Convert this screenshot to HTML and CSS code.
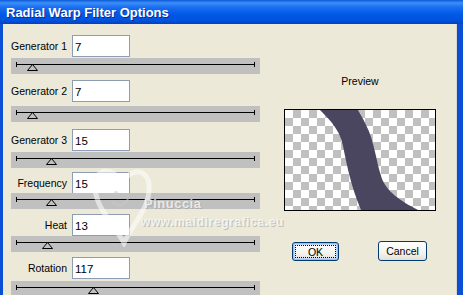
FILE: index.html
```html
<!DOCTYPE html>
<html lang="en">
<head>
  <meta charset="UTF-8" />
  <title>Radial Warp Filter Options</title>
  <link rel="stylesheet" href="styles.css">
</head>
<body>
  <div class="window">
    <div class="titlebar">Radial Warp Filter Options</div>
    <div class="frame">
      <div class="controls">
        <div class="field">
          <div class="row"><label class="label label-first">Generator 1</label><input class="box" type="text" value="7"></div>
          <div class="track"><span class="thumb" style="left: 16px"><svg width="11" height="7"><polygon points="5.5,0.5 10.5,6.5 0.5,6.5" /></svg></span></div>
        </div>
        <div class="field f2">
          <div class="row"><label class="label">Generator 2</label><input class="box" type="text" value="7"></div>
          <div class="track"><span class="thumb" style="left: 16px"><svg width="11" height="7"><polygon points="5.5,0.5 10.5,6.5 0.5,6.5" /></svg></span></div>
        </div>
        <div class="field f3">
          <div class="row"><label class="label">Generator 3</label><input class="box" type="text" value="15"></div>
          <div class="track"><span class="thumb" style="left: 35px"><svg width="11" height="7"><polygon points="5.5,0.5 10.5,6.5 0.5,6.5" /></svg></span></div>
        </div>
        <div class="field f4">
          <div class="row"><label class="label">Frequency</label><input class="box" type="text" value="15"></div>
          <div class="track"><span class="thumb" style="left: 35px"><svg width="11" height="7"><polygon points="5.5,0.5 10.5,6.5 0.5,6.5" /></svg></span></div>
        </div>
        <div class="field f5">
          <div class="row"><label class="label">Heat</label><input class="box" type="text" value="13"></div>
          <div class="track"><span class="thumb" style="left: 31px"><svg width="11" height="7"><polygon points="5.5,0.5 10.5,6.5 0.5,6.5" /></svg></span></div>
        </div>
        <div class="field f6">
          <div class="row"><label class="label">Rotation</label><input class="box" type="text" value="117"></div>
          <div class="track"><span class="thumb" style="left: 77px"><svg width="11" height="7"><polygon points="5.5,0.5 10.5,6.5 0.5,6.5" /></svg></span></div>
        </div>
      </div>

      <div class="side">
        <div class="preview-title">Preview</div>
        <div class="preview">
          <svg width="150" height="100" viewBox="0 0 150 100">
            <path d="M35,0 C45,10 55,20 58,36 C62,56 66,76 76,100 L133,100 C116,91 101,82 96,66 C91,50 89,30 81,15 C78,8 75,4 73,0 Z" fill="#4a4660" />
          </svg>
        </div>
        <div class="buttons">
          <button class="btn btn-default">OK</button>
          <button class="btn">Cancel</button>
        </div>
      </div>

      <div class="watermark">
        <svg class="heart" width="62" height="86" viewBox="0 0 62 86">
          <path d="M31,24 C23,4 2,6 4,28 C6,48 22,62 33,82 C42,62 58,48 58,28 C60,8 39,4 31,24 Z" fill="none" stroke="#ffffff" stroke-width="5" stroke-opacity="0.55" />
          <circle cx="25" cy="32" r="2" fill="#c8c8c8" fill-opacity="0.6" />
          <path d="M21,40 C25,46 33,46 37,38" fill="none" stroke="#c8c8c8" stroke-opacity="0.6" stroke-width="2" />
        </svg>
        <div class="wm-name">Pinuccia</div>
        <div class="wm-url">www.maidiregrafica.eu</div>
      </div>
    </div>
  </div>
</body>
</html>
```

FILE: styles.css
```css
body {
  margin: 0;
  background: #ece9d8;
  font-family: "Liberation Sans", Arial, sans-serif;
}
.window {
  width: 463px;
  height: 295px;
  overflow: hidden;
  display: flex;
  flex-direction: column;
}
.titlebar {
  height: 24px;
  line-height: 25px;
  padding-left: 6px;
  color: #fff;
  font-weight: bold;
  font-size: 13px;
  text-shadow: 1px 1px #0a2a9a;
  background: linear-gradient(#0a5ad8 0%, #3d8ef8 12%, #1a6ef0 30%, #0058e6 60%, #0052dc 85%, #0040c0 100%);
}
.frame {
  flex: 1;
  display: flex;
  position: relative;
  border-left: 3px solid #0b4fd6;
  border-right: 6px solid #0b4fd6;
  box-shadow: inset -1px 0 0 #d8d6cc;
}
.controls {
  width: 249px;
  padding: 11px 0 0 8px;
}
.field {
  display: flex;
  flex-direction: column;
}
.row {
  display: flex;
  align-items: center;
  height: 22px;
}
.label {
  width: 56px;
  margin-right: 5px;
  text-align: right;
  font-size: 10.5px;
  color: #000;
  white-space: nowrap;
}
.label-first {
  width: 53px;
  margin-right: 8px;
}
.box {
  width: 58px;
  height: 22px;
  box-sizing: border-box;
  margin: 0;
  padding: 4px 2px 2px;
  border: 1px solid #8d9eb4;
  background: #fff;
  font-family: "Liberation Sans", Arial, sans-serif;
  font-size: 11.5px;
  color: #000;
  outline: none;
}
.track {
  position: relative;
  height: 16px;
  margin-top: 1px;
  background: #c0c0c0;
}
.track::before {
  content: "";
  position: absolute;
  left: 5px;
  right: 5px;
  top: 6px;
  height: 1px;
  background: #000;
}
.track::after {
  content: "";
  position: absolute;
  left: 5px;
  right: 5px;
  top: 4px;
  height: 5px;
  border-left: 1px solid #000;
  border-right: 1px solid #000;
}
.thumb {
  position: absolute;
  top: 6px;
  width: 11px;
  height: 7px;
  z-index: 1;
}
.thumb svg {
  display: block;
}
.thumb polygon {
  fill: #c0c0c0;
  stroke: #000;
  stroke-width: 1;
}
.f2 { margin-top: 6px; }
.f2 .track { margin-top: 4px; }
.f3 { margin-top: 7px; }
.f4 { margin-top: 4px; }
.f4 .track { margin-top: -1px; }
.f5 { margin-top: 5px; }
.f5 .track { margin-top: 0; }
.f6 { margin-top: 5px; }
.f6 .track { margin-top: 2px; }

.side {
  display: flex;
  flex-direction: column;
  width: 152px;
  margin-left: 24px;
}
.preview-title {
  margin-top: 51px;
  height: 12px;
  line-height: 12px;
  text-align: center;
  font-size: 10.5px;
  color: #000;
}
.preview {
  margin-top: 22px;
  width: 150px;
  height: 100px;
  border: 1px solid #000;
  background: repeating-conic-gradient(#c0c0c0 0 25%, #ffffff 0 50%) 0 0 / 16px 16px;
}
.preview svg {
  display: block;
}
.buttons {
  display: flex;
  justify-content: space-between;
  align-items: flex-end;
  margin-top: 30px;
  padding: 0 9px 0 8px;
}
.btn {
  height: 20px;
  width: 49px;
  padding: 0;
  border: 1px solid #003c74;
  border-radius: 3px;
  background: linear-gradient(#ffffff 0%, #f4f3ee 60%, #e3e0d5 100%);
  font-family: "Liberation Sans", Arial, sans-serif;
  font-size: 10.5px;
  color: #000;
}
.btn-default {
  width: 47px;
  height: 19px;
  box-shadow: inset 0 0 0 1px #9dbcf0, inset 0 0 0 2px #c6d8f7;
  outline: 1px dotted #000;
  outline-offset: -4px;
}
.watermark {
  position: absolute;
  left: 85px;
  top: 134px;
  width: 230px;
  height: 96px;
  pointer-events: none;
}
.heart {
  position: absolute;
  left: 3px;
  top: 3px;
}
.wm-name {
  position: absolute;
  left: 56px;
  top: 38px;
  font-size: 13px;
  font-weight: bold;
  letter-spacing: 0.5px;
  color: rgba(250, 250, 250, 0.75);
  text-shadow: 1px 1px 0 rgba(150, 150, 150, 0.5);
}
.wm-url {
  position: absolute;
  left: 53px;
  top: 57px;
  font-size: 12px;
  font-weight: bold;
  letter-spacing: 0.6px;
  color: rgba(250, 250, 250, 0.75);
  text-shadow: 1px 1px 0 rgba(150, 150, 150, 0.5);
}
```
